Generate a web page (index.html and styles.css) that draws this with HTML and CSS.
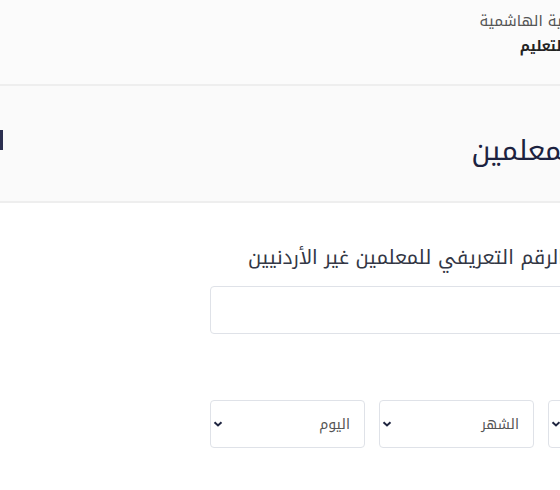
FILE: index.html
```html
<!DOCTYPE html>
<html lang="ar">
<head>
<meta charset="utf-8">
<link rel="stylesheet" href="styles.css">
</head>
<body>
<div class="page" dir="rtl">
  <header class="topbar">
    <div class="brand">
      <div class="brand-line">المملكة الأردنية الهاشمية</div>
      <div class="brand-line strong">وزارة التربية والتعليم</div>
    </div>
  </header>
  <section class="titlebar">
    <h1 class="title">تسجيل المعلمين</h1>
    <span class="edge-mark"></span>
  </section>
  <main class="form">
    <label class="field-label">الرقم الوطني أو الرقم التعريفي للمعلمين غير الأردنيين</label>
    <input class="text-input" type="text">
    <div class="date-row">
      <div class="select-wrap">
        <select class="select"><option>السنة</option></select>
        <svg class="chev" width="10" height="6" viewBox="0 0 10 6"><path d="M1.5 1.2 L5 4.5 L8.5 1.2" fill="none" stroke="#1f2540" stroke-width="2"/></svg>
      </div>
      <div class="select-wrap">
        <select class="select"><option>الشهر</option></select>
        <svg class="chev" width="10" height="6" viewBox="0 0 10 6"><path d="M1.5 1.2 L5 4.5 L8.5 1.2" fill="none" stroke="#1f2540" stroke-width="2"/></svg>
      </div>
      <div class="select-wrap">
        <select class="select"><option>اليوم</option></select>
        <svg class="chev" width="10" height="6" viewBox="0 0 10 6"><path d="M1.5 1.2 L5 4.5 L8.5 1.2" fill="none" stroke="#1f2540" stroke-width="2"/></svg>
      </div>
    </div>
  </main>
</div>
</body>
</html>
```
FILE: styles.css
```css
html, body {
  margin: 0;
  padding: 0;
  background: #ffffff;
}
body {
  width: 560px;
  height: 490px;
  overflow: hidden;
  font-family: "Noto Kufi Arabic", "Noto Sans Arabic", "DejaVu Sans", sans-serif;
}
.page {
  width: 900px;
  direction: rtl;
}
.topbar {
  height: 84px;
  background: #fbfbfb;
  border-bottom: 2px solid #eeeeee;
}
.brand {
  padding: 8px 250px 0 0;
}
.brand-line {
  font-size: 15px;
  line-height: 26px;
  color: #555555;
  white-space: nowrap;
}
.brand-line.strong {
  margin-right: -13px;
  font-size: 14px;
  font-weight: 700;
  color: #222222;
}
.titlebar {
  height: 115px;
  background: #fafafa;
  border-bottom: 2px solid #eeeeee;
  display: flex;
  align-items: center;
  justify-content: space-between;
  padding-right: 229px;
}
.title {
  margin: 0;
  padding-top: 14px;
  font-size: 28px;
  line-height: 40px;
  font-weight: 400;
  color: #1c2240;
  white-space: nowrap;
}
.edge-mark {
  align-self: flex-start;
  margin-top: 44px;
  width: 3px;
  height: 20px;
  background: #2b3050;
}
.form {
  width: 493px;
  margin-right: 197px;
  padding-top: 38px;
}
.field-label {
  display: block;
  margin-right: -4px;
  font-size: 19.5px;
  line-height: 34px;
  color: #333745;
  white-space: nowrap;
}
.text-input {
  display: block;
  box-sizing: border-box;
  width: 100%;
  height: 48px;
  margin-top: 11px;
  border: 1px solid #dfe2e8;
  border-radius: 4px;
  background: #ffffff;
}
.date-row {
  display: flex;
  gap: 14px;
  margin-top: 66px;
}
.select-wrap {
  position: relative;
  width: 155px;
  height: 48px;
}
.select {
  appearance: none;
  -webkit-appearance: none;
  box-sizing: border-box;
  width: 100%;
  height: 48px;
  border: 1px solid #dfe2e8;
  border-radius: 4px;
  background: #ffffff;
  padding: 0 14px 0 30px;
  font-family: inherit;
  font-size: 14px;
  color: #555555;
  direction: rtl;
}
.chev {
  position: absolute;
  left: 3px;
  top: 21px;
}
```
